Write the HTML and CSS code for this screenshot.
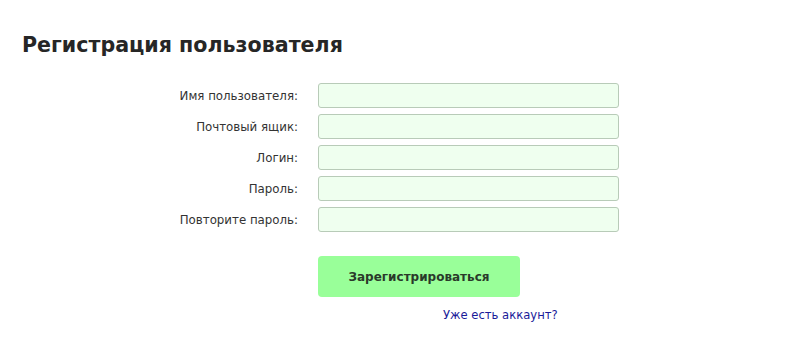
FILE: index.html
```html
<!DOCTYPE HTML>
<html>
  <head>
    <meta http-equiv="content-type" content="text/html; charset=utf-8">
    <title>Регистрация пользователя</title>
    <link rel="stylesheet" href="styles.css">
  </head>
  <body>
    <div id="container">
      <h1 class="pageTitle">Регистрация пользователя</h1>

      <form class="regForm" onsubmit="return false">
        <label class="fieldLabel" for="username">Имя пользователя:</label>
        <input id="username" class="editText" type="text">

        <label class="fieldLabel" for="email">Почтовый ящик:</label>
        <input id="email" class="editText" type="text">

        <label class="fieldLabel" for="login">Логин:</label>
        <input id="login" class="editText" type="text">

        <label class="fieldLabel" for="password">Пароль:</label>
        <input id="password" class="editText" type="password">

        <label class="fieldLabel" for="password2">Повторите пароль:</label>
        <input id="password2" class="editText" type="password">

        <div class="buttonRow">
          <input class="submitButton" type="submit" value="Зарегистрироваться">
        </div>
        <div class="loginRow">
          <a class="loginLink" href="#">Уже есть аккаунт?</a>
        </div>
      </form>
    </div>
  </body>
</html>
```

FILE: styles.css
```css
body {
  margin: 0;
  background-color: #fff;
  color: #333;
  font-family: "DejaVu Sans", Verdana, sans-serif;
}

#container {
  padding: 33px 22px 0 22px;
}

.pageTitle {
  margin: 0 0 26px 0;
  font-size: 20.6px;
  font-weight: bold;
  color: #262626;
}

.regForm {
  display: grid;
  grid-template-columns: 276px 301px;
  column-gap: 20px;
  row-gap: 6px;
  align-items: center;
}

.fieldLabel {
  text-align: right;
  font-size: 11.8px;
  color: #333;
}

.editText {
  box-sizing: border-box;
  width: 301px;
  height: 25px;
  margin: 0;
  border: 1px solid #b8cbb8;
  border-radius: 3px;
  background-color: #efffef;
  font-size: 13px;
}

.buttonRow {
  grid-column: 2;
  padding-top: 18px;
}

.submitButton {
  width: 202px;
  height: 41px;
  border: none;
  border-radius: 4px;
  background-color: #99ff99;
  color: #2a3a2a;
  font-family: "DejaVu Sans", Verdana, sans-serif;
  font-size: 12px;
  font-weight: bold;
}

.loginRow {
  grid-column: 2;
  padding-left: 125px;
  padding-top: 1px;
}

.loginLink {
  font-size: 11.6px;
  color: #1a1a99;
  text-decoration: none;
}
```
